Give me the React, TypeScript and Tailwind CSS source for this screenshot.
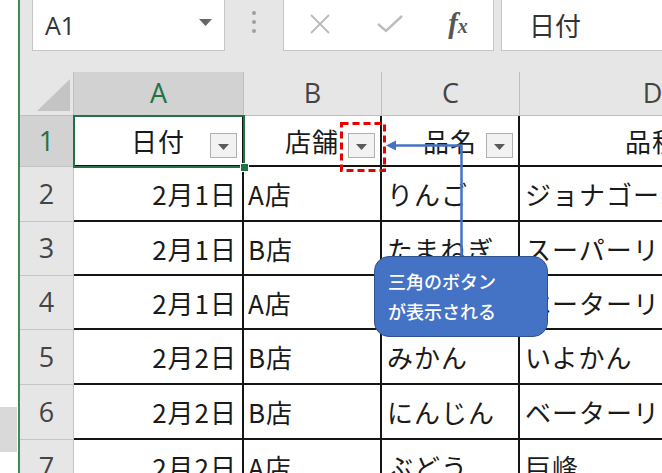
import React from "react";

const rows = [
  { n: 2, date: "2月1日", shop: "A店", item: "りんご", kind: "ジョナゴールド" },
  { n: 3, date: "2月1日", shop: "B店", item: "たまねぎ", kind: "スーパーリッチ" },
  { n: 4, date: "2月1日", shop: "A店", item: "にんじん", kind: "ベーターリッチ" },
  { n: 5, date: "2月2日", shop: "B店", item: "みかん", kind: "いよかん" },
  { n: 6, date: "2月2日", shop: "B店", item: "にんじん", kind: "ベーターリッチ" },
  { n: 7, date: "2月2日", shop: "A店", item: "ぶどう", kind: "巨峰" },
];

const cell =
  "bg-white border-r-2 border-b-2 border-[#151515] flex items-center overflow-hidden whitespace-nowrap text-[26px] tracking-[1px] text-[#1a1a1a] font-['Noto_Sans_CJK_JP',sans-serif]";

const FilterButton = () => (
  <div className="self-start mt-[17px] mr-[5px] w-[27px] h-[25px] shrink-0 border border-[#b0b0b0] bg-[#f2f2f2] flex items-center justify-center pt-[3px]">
    <svg width="11" height="6" viewBox="0 0 11 6">
      <polygon points="0,0 11,0 5.5,6" fill="#5a5a5a" />
    </svg>
  </div>
);

const HeadCell = ({ label }: { label: string }) => (
  <div className={cell}>
    <div className="w-[32px] shrink-0" />
    <div className="flex-1 text-center">{label}</div>
    <FilterButton />
  </div>
);

const RowHead = ({ n, active }: { n: number; active?: boolean }) => (
  <div
    className={
      active
        ? "bg-[#d2d2d2] border-r border-b border-[#c4c4c4] flex items-center justify-center text-[27px] text-[#217346] font-['Open_Sans',sans-serif]"
        : "bg-[#e6e6e6] border-r border-b border-[#c4c4c4] flex items-center justify-center text-[27px] text-[#444] font-['Open_Sans',sans-serif]"
    }
  >
    {n}
  </div>
);

const ColHead = ({ label, active }: { label: string; active?: boolean }) => (
  <div
    className={
      active
        ? "bg-[#d2d2d2] border-r border-b border-[#bfbfbf] flex items-center justify-center text-[27px] text-[#217346] font-['Open_Sans',sans-serif]"
        : "bg-[#e6e6e6] border-r border-b border-[#bfbfbf] flex items-center justify-center text-[27px] text-[#444] font-['Open_Sans',sans-serif]"
    }
  >
    {label}
  </div>
);

export default function App() {
  return (
    <div className="w-[662px] h-[473px] overflow-hidden relative flex bg-white">
      {/* left edge */}
      <div className="w-[20px] shrink-0 border-r-2 border-[#3f8a55] bg-white flex flex-col">
        <div className="h-[407px]" />
        <div className="h-[45px] w-[17px] bg-[#d9d9d9]" />
      </div>

      {/* excel window */}
      <div className="flex-1 min-w-0 bg-[#e6e6e6] flex flex-col">
        {/* formula bar */}
        <div className="h-[51px] flex shrink-0">
          <div className="ml-[12px] w-[193px] bg-white border border-t-0 border-[#c6c6c6] flex items-center justify-between pl-[12px] pr-[12px] pt-[2px]">
            <span className="text-[25px] text-[#333] font-['Open_Sans',sans-serif]">A1</span>
            <svg width="13" height="7" viewBox="0 0 13 7" className="mb-[8px]">
              <polygon points="0,0 13,0 6.5,7" fill="#666" />
            </svg>
          </div>
          <div className="w-[58px] flex flex-col items-center justify-center gap-[5px] pb-[7px]">
            <div className="w-[4px] h-[4px] rounded-full bg-[#a0a0a0]" />
            <div className="w-[4px] h-[4px] rounded-full bg-[#a0a0a0]" />
            <div className="w-[4px] h-[4px] rounded-full bg-[#a0a0a0]" />
          </div>
          <div className="w-[211px] bg-white border border-t-0 border-[#c6c6c6] flex items-center pb-[3px]">
            <div className="w-[72px] flex justify-center">
              <svg width="20" height="20" viewBox="0 0 20 20">
                <line x1="1" y1="1" x2="19" y2="19" stroke="#b8b8b8" strokeWidth="1.8" />
                <line x1="19" y1="1" x2="1" y2="19" stroke="#b8b8b8" strokeWidth="1.8" />
              </svg>
            </div>
            <div className="w-[68px] flex justify-center">
              <svg width="26" height="18" viewBox="0 0 26 18">
                <polyline points="1,9 9,16 25,1" fill="none" stroke="#bcbcbc" strokeWidth="2.4" />
              </svg>
            </div>
            <div className="w-[68px] flex justify-center">
              <span className="italic font-bold text-[29px] leading-none text-[#555] font-['Liberation_Serif',serif]">
                f<span className="text-[20px]">x</span>
              </span>
            </div>
          </div>
          <div className="ml-[7px] flex-1 bg-white border border-t-0 border-r-0 border-[#c6c6c6] flex items-center pl-[27px] pb-[2px] text-[26px] text-[#333] font-['Noto_Sans_CJK_JP',sans-serif]">
            日付
          </div>
        </div>

        <div className="h-[21px] shrink-0" />

        {/* sheet */}
        <div className="relative">
          <div className="grid grid-cols-[54px_170px_138px_138px_266px] grid-rows-[44px_51px_55px_54px_54px_55px_55px_55px] w-[766px]">
            <div className="bg-[#e6e6e6] border-r border-b border-[#bfbfbf] flex items-end justify-end pr-[3px] pb-[4px]">
              <svg width="33" height="32" viewBox="0 0 33 32">
                <polygon points="0,32 33,32 33,0" fill="#c4c4c4" />
              </svg>
            </div>
            <ColHead label="A" active />
            <ColHead label="B" />
            <ColHead label="C" />
            <ColHead label="D" />

            <RowHead n={1} active />
            <HeadCell label="日付" />
            <HeadCell label="店舗" />
            <HeadCell label="品名" />
            <HeadCell label="品種" />

            {rows.map((r) => (
              <React.Fragment key={r.n}>
                <RowHead n={r.n} />
                <div className={cell + " justify-end pr-[5px]"}>{r.date}</div>
                <div className={cell + " pl-[4px]"}>{r.shop}</div>
                <div className={cell + " pl-[5px]"}>{r.item}</div>
                <div className={cell + " pl-[5px]"}>{r.kind}</div>
              </React.Fragment>
            ))}
          </div>

          {/* selection of A1 */}
          <div className="absolute left-[53px] top-[43px] w-[172px] h-[53px] border-2 border-[#217346] pointer-events-none">
            <div className="absolute -right-[6px] -bottom-[6px] w-[9px] h-[9px] bg-[#217346] border border-white" />
          </div>
        </div>
      </div>

      {/* annotation: dashed box and arrow */}
      <svg className="absolute inset-0 pointer-events-none" width="662" height="473" viewBox="0 0 662 473">
        <rect x="341.5" y="123.5" width="43" height="47" fill="none" stroke="#e60000" strokeWidth="3" strokeDasharray="7 4" />
        <line x1="394" y1="145.5" x2="462" y2="145.5" stroke="#4472c4" strokeWidth="2.5" />
        <line x1="461.5" y1="145" x2="461.5" y2="258" stroke="#4472c4" strokeWidth="2.5" />
        <polygon points="386,145.5 396,140.5 396,150.5" fill="#4472c4" />
      </svg>

      {/* callout */}
      <div className="absolute left-[374px] top-[256px] w-[174px] h-[81px] rounded-[15px] bg-[#4472c4] border border-[#2f528f] text-white text-[18px] font-medium leading-[30px] pl-[13px] pt-[9px] font-['Noto_Sans_CJK_JP',sans-serif]">
        <div>三角のボタン</div>
        <div>が表示される</div>
      </div>
    </div>
  );
}
